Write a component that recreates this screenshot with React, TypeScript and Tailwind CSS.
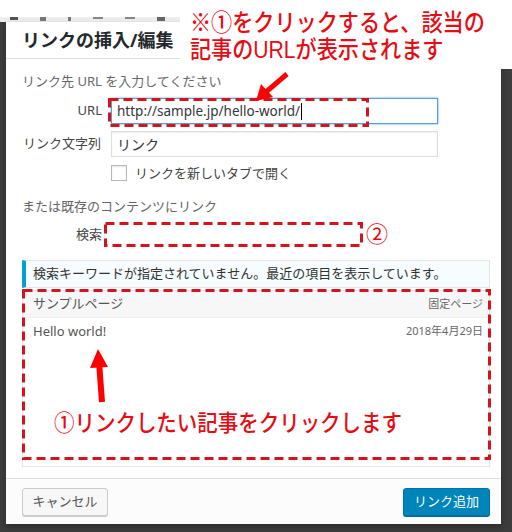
import React from "react";

const FONT = { fontFamily: '"Noto Sans","Noto Sans CJK JP",sans-serif' };
const ANNO = { fontFamily: '"Liberation Sans","Noto Sans CJK JP",sans-serif' };

export default function App() {
  return (
    <div className="relative w-[512px] h-[532px] overflow-hidden bg-[#3d3d3d]" style={FONT}>
      {/* top page strip */}
      <div className="h-[17px] bg-white" />
      <div className="h-[5px] w-[180px] bg-[#eeeeee] flex items-start gap-[22px] pl-[10px]">
        <span className="w-[8px] h-[3px] bg-[#555]" />
        <span className="w-[6px] h-[4px] bg-[#777]" />
        <span className="w-[3px] h-[4px] bg-[#777]" />
        <span className="w-[10px] h-[2px] bg-[#888]" />
        <span className="w-[10px] h-[2px] bg-[#888]" />
        <span className="w-[8px] h-[4px] bg-[#666]" />
      </div>

      {/* dialog */}
      <div className="ml-[6px] w-[495px] h-[502px] bg-white flex flex-col shadow-[0_3px_6px_rgba(0,0,0,0.3)]">
        <div className="h-[37px] shrink-0 border-b border-[#dddddd] pl-4 flex items-center">
          <span className="text-[18px] font-bold text-[#23282d] leading-none">リンクの挿入/編集</span>
        </div>

        <div className="flex-1 pl-4 pr-[11px] flex flex-col">
          <div className="mt-[14px] h-[16px] text-[13px] leading-[16px] text-[#666]">リンク先 URL を入力してください</div>

          <div className="mt-[9px] h-[26px] flex items-center">
            <div className="w-[80px] text-right text-[13px] text-[#444]">URL</div>
            <div className="ml-[9px] w-[327px] h-[26px] border border-[#5b9dd9] shadow-[0_0_2px_rgba(30,140,190,0.8)] flex items-center pl-[5px] text-[13.5px] text-[#32373c]">
              <span>http://sample.jp/hello-world/</span>
              <span className="w-px h-[17px] bg-black ml-px" />
            </div>
          </div>

          <div className="mt-[7px] h-[26px] flex items-center">
            <div className="w-[80px] text-right text-[13px] text-[#444] pr-[1px]">リンク文字列</div>
            <div className="ml-[9px] w-[327px] h-[26px] border border-[#dddddd] shadow-[inset_0_1px_2px_rgba(0,0,0,0.07)] flex items-center pl-[5px] text-[14px] text-[#32373c]">
              リンク
            </div>
          </div>

          <div className="mt-[8px] h-[16px] flex items-center pl-[89px]">
            <span className="w-[16px] h-[16px] border border-[#b4b9be] bg-white shadow-[inset_0_1px_2px_rgba(0,0,0,0.1)]" />
            <span className="ml-[8px] text-[13px] text-[#444] leading-[16px]">リンクを新しいタブで開く</span>
          </div>

          <div className="mt-[17px] h-[16px] text-[13px] leading-[16px] text-[#666]">または既存のコンテンツにリンク</div>

          <div className="mt-[8px] h-[25px] flex items-center">
            <div className="w-[80px] text-right text-[13px] text-[#444]">検索</div>
          </div>

          <div className="mt-[13px] h-[28px] w-[468px] border border-[#e5e5e5] border-l-4 border-l-[#00a0d2] bg-[#f7fcfe] flex items-center pl-[7px] text-[13px] text-[#333]">
            検索キーワードが指定されていません。最近の項目を表示しています。
          </div>

          <div className="mt-[2px] h-[177px] w-[468px] border border-[#e5e5e5] bg-white flex flex-col">
            <div className="h-[27px] bg-[#f7f7f7] border-b border-[#f1f1f1] flex items-center justify-between pl-[10px] pr-[6px]">
              <span className="text-[13px] text-[#555]">サンプルページ</span>
              <span className="text-[11px] text-[#666]">固定ページ</span>
            </div>
            <div className="h-[27px] flex items-center justify-between pl-[10px] pr-[6px]">
              <span className="text-[13px] text-[#555]">Hello world!</span>
              <span className="text-[11px] text-[#666]">2018年4月29日</span>
            </div>
          </div>
        </div>

        <div className="h-[46px] shrink-0 border-t border-[#dddddd] bg-[#fcfcfc] pl-4 pr-[11px] flex items-center justify-between">
          <button className="h-[28px] w-[86px] rounded-[3px] border border-[#cccccc] bg-[#f7f7f7] shadow-[0_1px_0_#cccccc] text-[13px] text-[#555]">
            キャンセル
          </button>
          <button className="h-[28px] w-[87px] rounded-[3px] border border-[#0073aa] bg-[#0085ba] shadow-[0_1px_0_#006799] text-[13px] text-white">
            リンク追加
          </button>
        </div>
      </div>

      {/* annotation white box */}
      <div className="absolute left-[180px] top-0 w-[332px] h-[69px] bg-white" />
      <div style={ANNO} className="absolute left-[190px] top-[10px] h-[26px] origin-left scale-x-[0.88] text-[24px] leading-[26px] font-medium text-[#e50c14] whitespace-nowrap">
        ※①をクリックすると、該当の
      </div>
      <div style={ANNO} className="absolute left-[190px] top-[37px] h-[26px] origin-left scale-x-[0.88] text-[24px] leading-[26px] font-medium text-[#e50c14] whitespace-nowrap">
        記事のURLが表示されます
      </div>

      <div className="absolute left-[366px] top-[219px] text-[22px] leading-[28px] text-[#e50c14]">②</div>

      <div className="absolute left-[54px] top-[408px] origin-left scale-x-[0.89] text-[23px] leading-[28px] font-medium text-[#e50c14] whitespace-nowrap">
        ①リンクしたい記事をクリックします
      </div>

      <svg className="absolute left-0 top-0 pointer-events-none" width="512" height="532" viewBox="0 0 512 532">
        <g fill="none" stroke="#d4141c" strokeWidth="3" strokeDasharray="9 5">
          <rect x="109.5" y="99.5" width="258" height="26" />
          <rect x="105.5" y="223.5" width="256" height="22" />
          <rect x="23.5" y="290.5" width="466" height="168" />
        </g>
        <g fill="#ff0000">
          <line x1="287" y1="74" x2="266" y2="92" stroke="#ff0000" strokeWidth="5" />
          <polygon points="256,101 261,84 273,97" />
          <line x1="102" y1="402" x2="99" y2="362" stroke="#ff0000" strokeWidth="6" />
          <polygon points="98,349 90,368 108,367" />
        </g>
      </svg>
    </div>
  );
}
